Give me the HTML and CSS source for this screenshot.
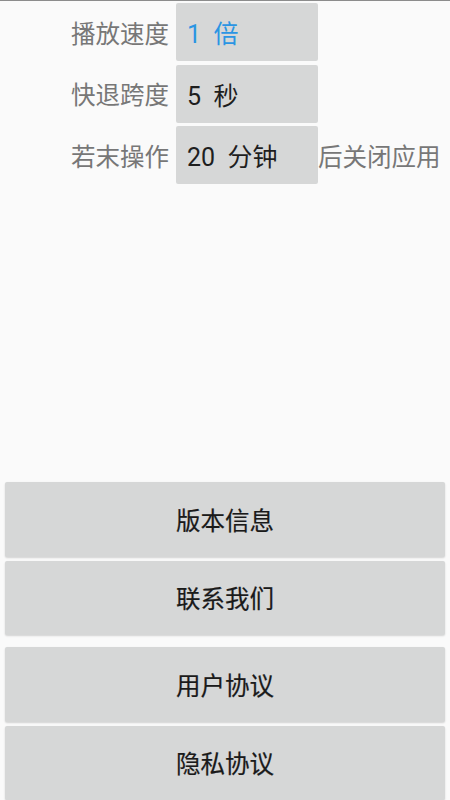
FILE: index.html
```html
<!DOCTYPE html>
<html lang="zh-CN">
<head>
<meta charset="utf-8">
<title>设置</title>
<link rel="stylesheet" href="styles.css">
</head>
<body>
<div class="page">
  <div class="settings">
    <div class="row">
      <span class="label">播放速度</span>
      <div class="spinner"><span class="value accent">1&nbsp; 倍</span></div>
    </div>
    <div class="row">
      <span class="label">快退跨度</span>
      <div class="spinner"><span class="value">5&nbsp; 秒</span></div>
    </div>
    <div class="row">
      <span class="label">若末操作</span>
      <div class="spinner"><span class="value">20&nbsp; 分钟</span></div>
      <span class="suffix">后关闭应用</span>
    </div>
  </div>
  <div class="actions">
    <div class="group">
      <div class="btn">版本信息</div>
      <div class="btn">联系我们</div>
    </div>
    <div class="group">
      <div class="btn">用户协议</div>
      <div class="btn">隐私协议</div>
    </div>
  </div>
</div>
</body>
</html>
```
FILE: styles.css
```css
html, body {
  margin: 0;
  padding: 0;
  background: #fafafa;
}
body {
  font-family: Roboto, "Noto Sans CJK SC", "Noto Sans", sans-serif;
  overflow: hidden;
}
.page {
  height: 800px;
  display: flex;
  flex-direction: column;
  border-top: 1px solid #8c8c8c;
  box-sizing: border-box;
}
.settings {
  display: flex;
  flex-direction: column;
  gap: 3.5px;
  padding-top: 2px;
}
.row {
  display: flex;
  align-items: center;
  height: 58px;
}
.label {
  width: 169px;
  text-align: right;
  margin-right: 7px;
  font-size: 24.5px;
  color: #777777;
  font-family: "Noto Sans CJK SC", sans-serif;
}
.spinner {
  width: 142px;
  height: 58px;
  background: #d6d7d7;
  border-radius: 2px;
  display: flex;
  align-items: center;
  padding-left: 11px;
  box-sizing: border-box;
}
.value {
  font-size: 25px;
  color: #1e1e1e;
}
.value.accent {
  color: #2b95e3;
}
.suffix {
  margin-left: 0;
  font-size: 24.5px;
  color: #777777;
  font-family: "Noto Sans CJK SC", sans-serif;
}
.actions {
  margin-top: auto;
  display: flex;
  flex-direction: column;
  gap: 12px;
  padding: 0 5px;
}
.group {
  display: flex;
  flex-direction: column;
  gap: 4px;
}
.btn {
  height: 74.5px;
  background: #d6d7d7;
  border-radius: 2px;
  box-shadow: 0 1px 2px rgba(0, 0, 0, 0.16);
  display: flex;
  align-items: center;
  justify-content: center;
  font-family: "Noto Sans CJK SC", sans-serif;
  font-size: 24.5px;
  color: #1a1a1a;
  -webkit-text-stroke: 0.2px #1a1a1a;
}
```
